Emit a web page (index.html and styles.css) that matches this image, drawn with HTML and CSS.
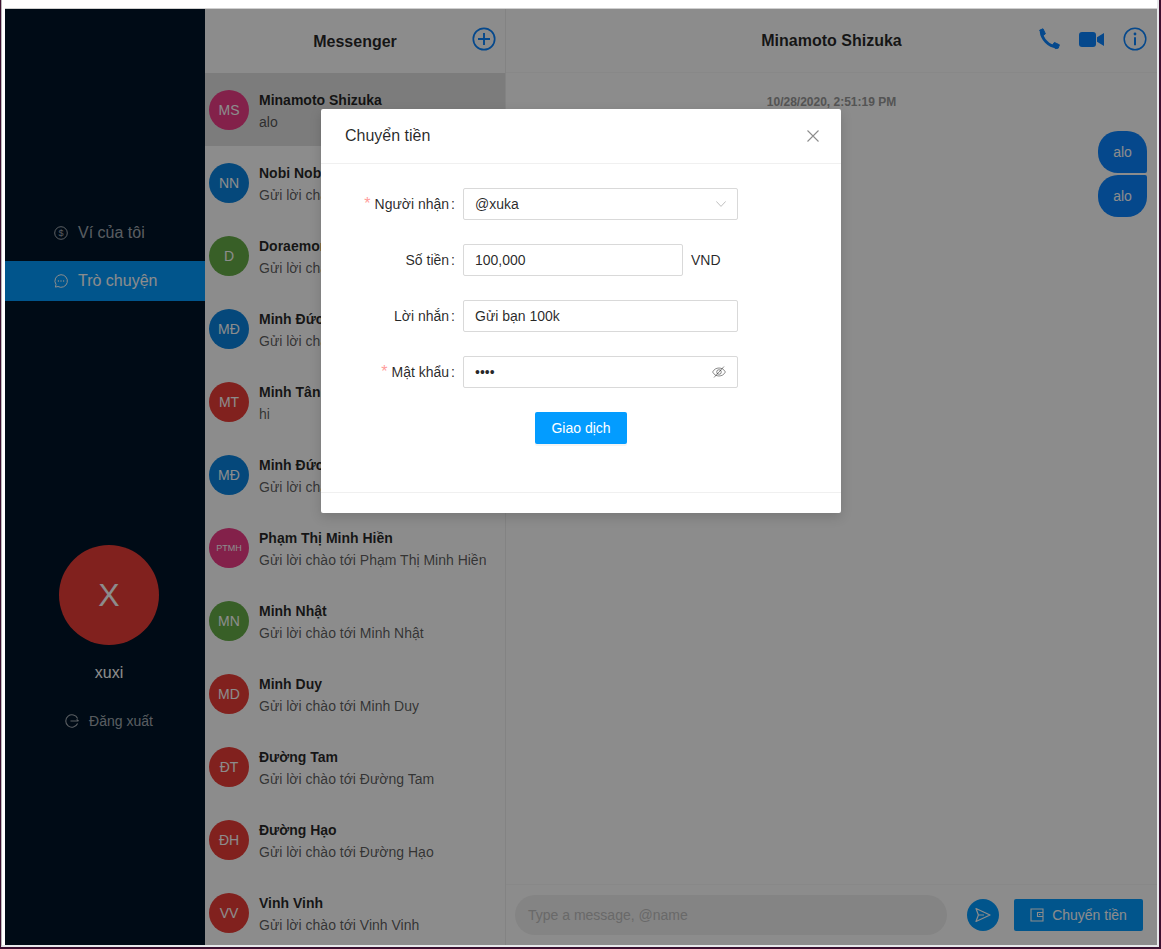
FILE: index.html
```html
<!DOCTYPE html>
<html lang="vi">
<head>
    <meta charset="UTF-8">
    <meta name="viewport" content="width=device-width, initial-scale=1.0">
    <title>Messenger</title>
    <link rel="stylesheet" href="styles.css">
</head>
<body>
<div class="screen">
<div class="window">
<div class="app">
    <!-- Left menu -->
    <aside class="sidebar">
        <div class="menu-item">
            <svg class="menu-icon" viewBox="0 0 14 14"><circle cx="7" cy="7" r="6.3" fill="none" stroke="currentColor"/><text x="7" y="10.2" text-anchor="middle" font-size="9" fill="currentColor">$</text></svg>
            <span>Ví của tôi</span>
        </div>
        <div class="menu-item selected">
            <svg class="menu-icon" viewBox="0 0 14 14"><path d="M7 .7a6.3 6.3 0 1 1-3 11.8l-2.6.6.6-2.6A6.3 6.3 0 0 1 7 .7z" fill="none" stroke="currentColor"/><circle cx="4.4" cy="7" r=".7" fill="currentColor"/><circle cx="7" cy="7" r=".7" fill="currentColor"/><circle cx="9.6" cy="7" r=".7" fill="currentColor"/></svg>
            <span>Trò chuyện</span>
        </div>
        <div class="me-avatar">X</div>
        <div class="me-name">xuxi</div>
        <div class="logout">
            <svg class="logout-icon" viewBox="0 0 14 14"><path d="M12.6 4.4A6.2 6.2 0 1 0 12.6 9.6" fill="none" stroke="currentColor" stroke-width="1.1"/><path d="M5.5 7h8M11.6 5.4 13.6 7" fill="none" stroke="currentColor" stroke-width="1.1"/></svg>
            <span>Đăng xuất</span>
        </div>
    </aside>

    <!-- Conversation list -->
    <section class="threads">
        <header class="threads-head">
            <h1 class="threads-title">Messenger</h1>
            <svg class="add-icon" viewBox="0 0 24 24"><circle cx="12" cy="12" r="10.7" fill="none" stroke="currentColor" stroke-width="1.7"/><path d="M12 6v12M6 12h12" stroke="currentColor" stroke-width="1.9"/></svg>
        </header>
        <div class="thread active">
            <div class="avatar magenta">MS</div>
            <div class="thread-text"><div class="thread-name">Minamoto Shizuka</div><div class="thread-last">alo</div></div>
        </div>
        <div class="thread">
            <div class="avatar blue">NN</div>
            <div class="thread-text"><div class="thread-name">Nobi Nobita</div><div class="thread-last">Gửi lời chào tới Nobi Nobita</div></div>
        </div>
        <div class="thread">
            <div class="avatar green">D</div>
            <div class="thread-text"><div class="thread-name">Doraemon</div><div class="thread-last">Gửi lời chào tới Doraemon</div></div>
        </div>
        <div class="thread">
            <div class="avatar blue">MĐ</div>
            <div class="thread-text"><div class="thread-name">Minh Đức</div><div class="thread-last">Gửi lời chào tới Minh Đức</div></div>
        </div>
        <div class="thread">
            <div class="avatar red">MT</div>
            <div class="thread-text"><div class="thread-name">Minh Tân</div><div class="thread-last">hi</div></div>
        </div>
        <div class="thread">
            <div class="avatar blue">MĐ</div>
            <div class="thread-text"><div class="thread-name">Minh Đức</div><div class="thread-last">Gửi lời chào tới Minh Đức</div></div>
        </div>
        <div class="thread">
            <div class="avatar magenta small">PTMH</div>
            <div class="thread-text"><div class="thread-name">Phạm Thị Minh Hiền</div><div class="thread-last">Gửi lời chào tới Phạm Thị Minh Hiền</div></div>
        </div>
        <div class="thread">
            <div class="avatar green">MN</div>
            <div class="thread-text"><div class="thread-name">Minh Nhật</div><div class="thread-last">Gửi lời chào tới Minh Nhật</div></div>
        </div>
        <div class="thread">
            <div class="avatar red">MD</div>
            <div class="thread-text"><div class="thread-name">Minh Duy</div><div class="thread-last">Gửi lời chào tới Minh Duy</div></div>
        </div>
        <div class="thread">
            <div class="avatar red">ĐT</div>
            <div class="thread-text"><div class="thread-name">Đường Tam</div><div class="thread-last">Gửi lời chào tới Đường Tam</div></div>
        </div>
        <div class="thread">
            <div class="avatar red">ĐH</div>
            <div class="thread-text"><div class="thread-name">Đường Hạo</div><div class="thread-last">Gửi lời chào tới Đường Hạo</div></div>
        </div>
        <div class="thread">
            <div class="avatar red">VV</div>
            <div class="thread-text"><div class="thread-name">Vinh Vinh</div><div class="thread-last">Gửi lời chào tới Vinh Vinh</div></div>
        </div>
    </section>

    <!-- Open conversation -->
    <section class="chat">
        <header class="chat-head">
            <h2 class="chat-title">Minamoto Shizuka</h2>
            <div class="chat-tools">
                <svg class="tool phone" viewBox="0 0 22 22"><path d="M3.2 3.500C3.800 11 10.500 18.300 18.500 18.800" fill="none" stroke="currentColor" stroke-width="3"/><path d="M1.600 2.200 5 .8l2.400 5-2.600 1.800zM14.600 17l1.800-2.600 5 2.400-1.200 3.400-3 .4z" fill="currentColor" stroke="currentColor" stroke-linejoin="round"/></svg>
                <svg class="tool video" viewBox="0 0 25 15"><rect x="0" y="0" width="17" height="15" rx="3" fill="currentColor"/><path d="M18 5.200 25 1v13l-7-4.200z" fill="currentColor"/></svg>
                <svg class="tool info" viewBox="0 0 24 24"><circle cx="12" cy="12" r="10.800" fill="none" stroke="currentColor" stroke-width="1.500"/><circle cx="12" cy="7" r="1.400" fill="currentColor"/><path d="M12 10.200v8" stroke="currentColor" stroke-width="2"/></svg>
            </div>
        </header>
        <div class="messages">
            <div class="stamp">10/28/2020, 2:51:19 PM</div>
            <div class="bubble first">alo</div>
            <div class="bubble last">alo</div>
        </div>
        <footer class="composer">
            <div class="composer-input">Type a message, @name</div>
            <button class="send-btn">
                <svg class="send-icon" viewBox="0 0 16 16"><path d="M1 1.500 15 8 1 14.500 3.400 8zM3.400 8H9" fill="none" stroke="currentColor" stroke-width="1.200" stroke-linejoin="round"/></svg>
            </button>
            <button class="transfer-btn">
                <svg class="wallet-icon" viewBox="0 0 14 14"><path d="M1 1h12v12H1zM13 4.500H7.500v4H13M9 6.500h1.400" fill="none" stroke="currentColor" stroke-width="1.100"/></svg>
                <span>Chuyển tiền</span>
            </button>
        </footer>
    </section>

    <!-- Transfer modal -->
    <div class="overlay">
        <div class="modal">
            <div class="modal-head">
                <span class="modal-title">Chuyển tiền</span>
                <svg class="close-icon" viewBox="0 0 12 12"><path d="M.5.5l11 11M11.500.5l-11 11" stroke="currentColor" stroke-width="1.100"/></svg>
            </div>
            <div class="modal-body">
                <div class="form-row">
                    <label class="form-label required">Người nhận</label>
                    <div class="select">
                        <span>@xuka</span>
                        <svg class="arrow-icon" viewBox="0 0 10 6"><path d="M.3.4 5 5.400 9.700.4" fill="none" stroke="currentColor"/></svg>
                    </div>
                </div>
                <div class="form-row">
                    <label class="form-label">Số tiền</label>
                    <input class="field field-amount" type="text" value="100,000">
                    <span class="unit">VND</span>
                </div>
                <div class="form-row">
                    <label class="form-label">Lời nhắn</label>
                    <input class="field" type="text" value="Gửi bạn 100k">
                </div>
                <div class="form-row">
                    <label class="form-label required">Mật khẩu</label>
                    <div class="password">
                        <input class="password-input" type="password" value="1234">
                        <svg class="eye-icon" viewBox="0 0 14 14"><path d="M.6 7C2 4.400 4.200 3 7 3s5 1.400 6.400 4c-1.400 2.600-3.600 4-6.400 4S2 9.600.6 7z" fill="none" stroke="currentColor"/><circle cx="7" cy="7" r="2.300" fill="none" stroke="currentColor"/><path d="M12 1.500 2 12.500" stroke="currentColor"/></svg>
                    </div>
                </div>
                <div class="form-actions">
                    <button class="submit-btn">Giao dịch</button>
                </div>
            </div>
            <div class="modal-foot"></div>
        </div>
    </div>
</div>
</div>
</div>
</body>
</html>
```

FILE: styles.css
```css
* {
    box-sizing: border-box;
}

html, body {
    margin: 0;
    height: 100%;
    overflow: hidden;
}

body {
    font-family: "Liberation Sans", Arial, sans-serif;
    font-size: 14px;
    color: rgba(0, 0, 0, 0.85);
}

/* Bits of the desktop around the browser window */
.screen {
    height: 949px;
    padding: 0 0 2px 1px;
    background: #3c1030;
}

.window {
    height: 100%;
    margin-right: 2px;
    padding: 8px 0 0 3px;
    background: #fff;
    border-left: 1px solid #b9b9b9;
    border-right: 2px solid #e6e8ea;
    border-bottom: 2px solid #e6e8ea;
}

.app {
    position: relative;
    display: flex;
    height: 100%;
    border-top: 1px solid #cfcfcf;
    overflow: hidden;
}

/* Sidebar */
.sidebar {
    flex: 0 0 200px;
    padding-top: 204px;
    display: flex;
    flex-direction: column;
    align-items: center;
    background: #001529;
    color: rgba(255, 255, 255, 0.65);
}

.menu-item {
    align-self: stretch;
    height: 40px;
    margin-bottom: 8px;
    padding-left: 49px;
    display: flex;
    align-items: center;
    gap: 10px;
    font-size: 16px;
}

.menu-item.selected {
    margin-bottom: 0;
    background: #039cff;
    color: #fff;
}

.menu-icon {
    width: 14px;
    height: 14px;
}

.me-avatar {
    width: 100px;
    height: 100px;
    margin: 244px 0 0 8px;
    border-radius: 50%;
    display: flex;
    align-items: center;
    justify-content: center;
    background: #ec3d37;
    color: #fff;
    font-size: 32px;
}

.me-name {
    margin: 18px 0 0 8px;
    font-size: 16px;
    line-height: 20px;
    color: #fff;
}

.logout {
    margin: 28px 0 0 8px;
    display: flex;
    align-items: center;
    gap: 10px;
    line-height: 20px;
}

.logout-icon {
    width: 14px;
    height: 14px;
}

/* Conversation list */
.threads {
    flex: 0 0 301px;
    border-right: 1px solid #eeeeee;
    background: #fff;
}

.threads-head {
    position: relative;
    height: 64px;
    display: flex;
    align-items: center;
    justify-content: center;
}

.threads-title {
    margin: 0;
    padding-top: 1px;
    font-size: 16px;
    font-weight: 700;
}

.add-icon {
    position: absolute;
    top: 18px;
    right: 9px;
    width: 24px;
    height: 24px;
    color: #0a84ff;
}

.thread {
    height: 73px;
    padding-left: 4px;
    display: flex;
    align-items: center;
    gap: 10px;
}

.thread.active {
    background: #e2e2e2;
}

.thread-text {
    padding-top: 2px;
}

.avatar {
    flex: 0 0 40px;
    height: 40px;
    border-radius: 50%;
    display: flex;
    align-items: center;
    justify-content: center;
    color: #fff;
    font-size: 14px;
}

.avatar.small {
    font-size: 9px;
}

.magenta { background: #ee3c88; }
.blue { background: #0a84e0; }
.green { background: #66ad47; }
.red { background: #ec3d37; }

.thread-name {
    font-weight: 700;
    line-height: 22px;
}

.thread-last {
    line-height: 22px;
    color: rgba(0, 0, 0, 0.65);
}

/* Chat column */
.chat {
    flex: 1;
    display: flex;
    flex-direction: column;
    background: #fff;
}

.chat-head {
    position: relative;
    flex: 0 0 64px;
    display: flex;
    align-items: center;
    justify-content: center;
    border-bottom: 1px solid #f8f8f8;
}

.chat-title {
    margin: 0;
    padding-top: 1px;
    font-size: 16px;
    font-weight: 700;
}

.chat-tools {
    position: absolute;
    top: 18px;
    right: 10px;
    display: flex;
    align-items: center;
    gap: 19px;
    color: #0a84ff;
}

.tool {
    display: block;
}

.phone {
    width: 22px;
    height: 22px;
}

.video {
    width: 25px;
    height: 15px;
}

.info {
    width: 24px;
    height: 24px;
}

.messages {
    flex: 1;
    padding: 21px 10px 0;
    display: flex;
    flex-direction: column;
    align-items: flex-end;
}

.stamp {
    align-self: stretch;
    margin-bottom: 21px;
    text-align: center;
    font-size: 12px;
    font-weight: 700;
    line-height: 16px;
    color: #999;
}

.bubble {
    width: 49px;
    height: 42px;
    margin-bottom: 2px;
    display: flex;
    align-items: center;
    justify-content: center;
    background: #0a84ff;
    color: #fff;
    border-radius: 20px;
}

.bubble.first {
    border-bottom-right-radius: 2px;
}

.bubble.last {
    border-top-right-radius: 2px;
}

.composer {
    flex: 0 0 61px;
    padding: 10px 14px 0 9px;
    display: flex;
    align-items: flex-start;
    border-top: 1px solid #f8f8f8;
}

.composer-input {
    flex: 0 0 432px;
    height: 40px;
    padding-left: 13px;
    display: flex;
    align-items: center;
    border-radius: 20px;
    background: #f1f1f1;
    color: #bfbfbf;
}

.send-btn {
    width: 32px;
    height: 32px;
    margin: 4px 15px 0 20px;
    padding: 0;
    border: 0;
    border-radius: 50%;
    display: flex;
    align-items: center;
    justify-content: center;
    background: #039cff;
    color: #fff;
}

.send-icon {
    width: 16px;
    height: 16px;
}

.transfer-btn {
    width: 129px;
    height: 32px;
    margin-top: 4px;
    padding: 0;
    border: 0;
    border-radius: 2px;
    display: flex;
    align-items: center;
    justify-content: center;
    gap: 8px;
    background: #039cff;
    color: #fff;
    font-family: inherit;
    font-size: 14px;
}

.wallet-icon {
    width: 14px;
    height: 14px;
}

/* Modal */
.overlay {
    position: absolute;
    top: 0;
    left: 0;
    right: 0;
    bottom: 0;
    padding-top: 100px;
    display: flex;
    justify-content: center;
    align-items: flex-start;
    background: rgba(0, 0, 0, 0.45);
}

.modal {
    width: 520px;
    background: #fff;
    border-radius: 2px;
    box-shadow: 0 4px 12px rgba(0, 0, 0, 0.15);
}

.modal-head {
    height: 55px;
    padding: 0 22px 0 24px;
    display: flex;
    align-items: center;
    justify-content: space-between;
    border-bottom: 1px solid #f0f0f0;
}

.modal-title {
    font-size: 16px;
}

.close-icon {
    width: 12px;
    height: 12px;
    color: rgba(0, 0, 0, 0.45);
}

.modal-body {
    height: 328px;
    padding: 24px 24px 0;
}

.form-row {
    height: 32px;
    margin-bottom: 24px;
    display: flex;
    align-items: center;
}

.form-label {
    flex: 0 0 118px;
    text-align: right;
}

.form-label::after {
    content: ":";
    margin: 0 8px 0 2px;
}

.form-label.required::before {
    content: "*";
    margin-right: 4px;
    font-size: 16px;
    line-height: 14px;
    color: #ff9c9c;
}

.select,
.field,
.password {
    width: 275px;
    height: 32px;
    padding: 0 11px;
    border: 1px solid #d9d9d9;
    border-radius: 2px;
    background: #fff;
    font-family: inherit;
    font-size: 14px;
    color: rgba(0, 0, 0, 0.85);
}

.select,
.password {
    display: flex;
    align-items: center;
    justify-content: space-between;
}

.field-amount {
    width: 220px;
}

.unit {
    margin-left: 8px;
}

.arrow-icon {
    width: 10px;
    height: 6px;
    color: #bfbfbf;
}

.password-input {
    flex: 1;
    min-width: 0;
    padding: 0;
    border: 0;
    outline: 0;
    font-family: inherit;
    font-size: 14px;
    color: rgba(0, 0, 0, 0.85);
}

.eye-icon {
    width: 14px;
    height: 14px;
    color: rgba(0, 0, 0, 0.45);
}

.form-actions {
    display: flex;
    justify-content: center;
}

.submit-btn {
    width: 92px;
    height: 32px;
    padding: 0;
    border: 0;
    border-radius: 2px;
    background: #039cff;
    color: #fff;
    font-family: inherit;
    font-size: 14px;
    box-shadow: 0 2px 0 rgba(0, 0, 0, 0.045);
}

.modal-foot {
    height: 21px;
    border-top: 1px solid #f0f0f0;
}
```
